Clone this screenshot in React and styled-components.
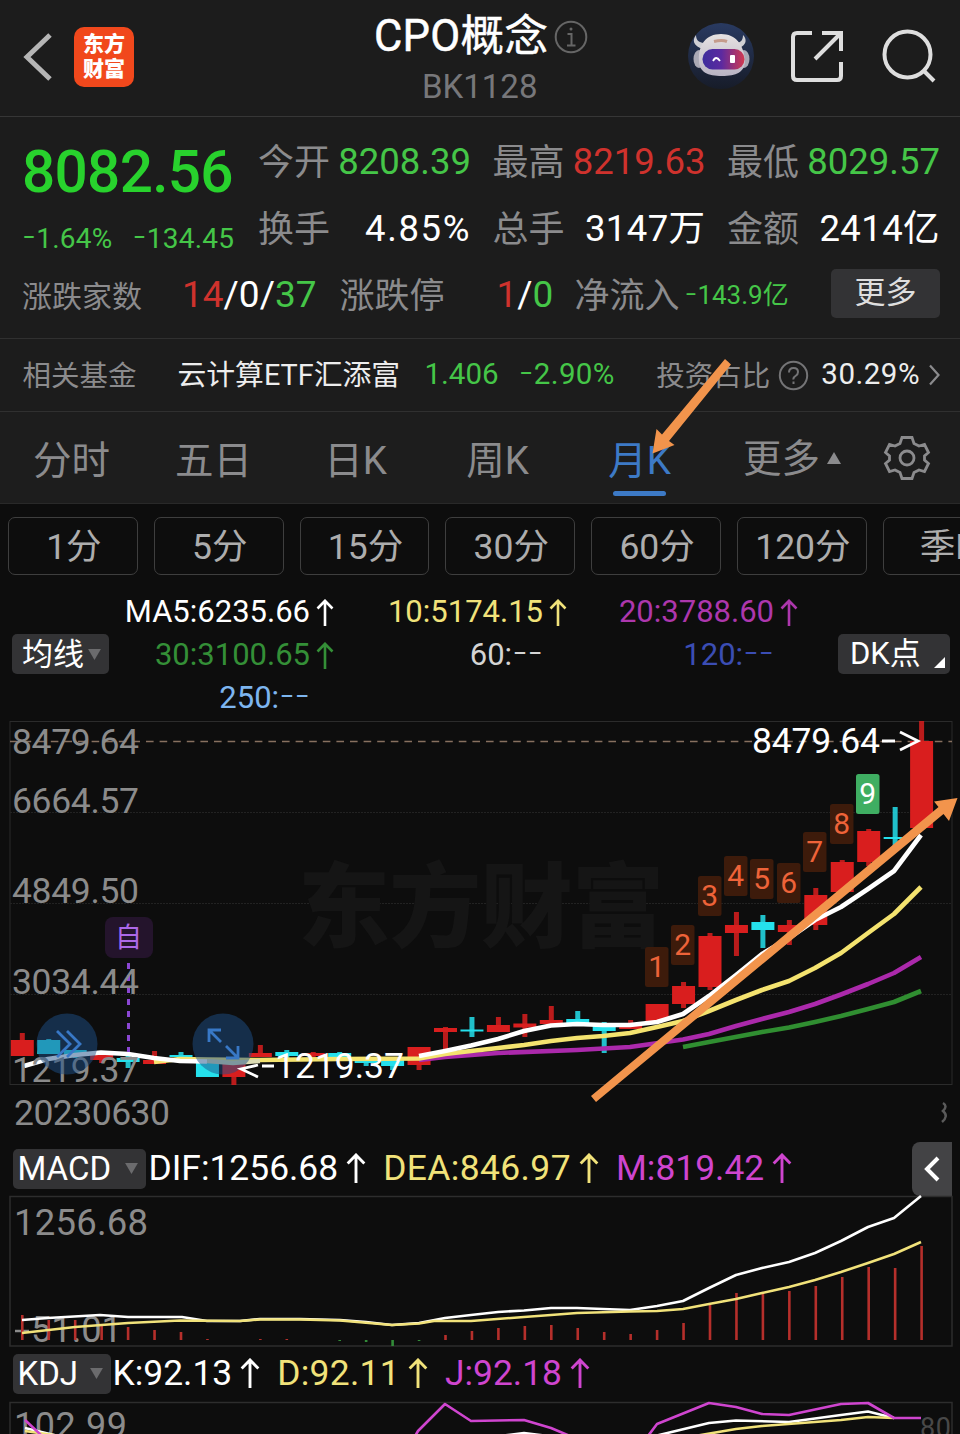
import React from 'react';
import styled, { createGlobalStyle } from 'styled-components';

const GREEN = '#45c648';
const RED = '#cf322d';
const GREY = '#8b8b8d';
const YELLOW = '#f1e27a';
const PINK = '#cf45cf';
const CANDLE_RED = '#d91e1e';
const CANDLE_CYAN = '#25e0ec';
const ORANGE = '#f2944c';

const GlobalStyle = createGlobalStyle`
  * {
    box-sizing: border-box;
  }
  body {
    margin: 0;
    background: #0d0d0d;
    font-family: Roboto, 'Noto Sans CJK SC', sans-serif;
  }
  svg {
    display: block;
    flex: none;
  }
`;

const Page = styled.div`
  position: relative;
  width: 960px;
  height: 1434px;
  overflow: hidden;
  background: #0d0d0d;
  color: #fff;
  line-height: 1.2;
  white-space: nowrap;
`;

const Header = styled.header`
  display: grid;
  grid-template-columns: 370px 1fr 272px;
  height: 117px;
  background: #1c1c1c;
  border-bottom: 1px solid #363636;
`;

const HeaderLeft = styled.div`
  display: flex;
  align-items: center;
  gap: 20px;
  height: 114px;
  padding-left: 22px;
`;

const Logo = styled.div`
  display: flex;
  flex-direction: column;
  justify-content: center;
  width: 60px;
  height: 60px;
  border-radius: 10px;
  background: #f1481c;
  font-size: 21px;
  font-weight: 900;
  line-height: 25px;
  text-align: center;
`;

const HeaderTitle = styled.div`
  display: flex;
  flex-direction: column;
  padding: 8px 0 0 4px;
`;

const TitleRow = styled.div`
  display: flex;
  align-items: center;
  gap: 6px;
  height: 58px;
`;

const Title = styled.h1`
  margin: 0;
  font-size: 43.5px;
  font-weight: 400;
  letter-spacing: 0.3px;
  line-height: 62px;
  -webkit-text-stroke: 0.5px #fff;
`;

const Code = styled.div`
  padding-left: 48px;
  color: #77777a;
  font-size: 33px;
  line-height: 41px;
`;

const HeaderRight = styled.div`
  display: flex;
  align-items: center;
  height: 112px;
`;

const Quote = styled.section`
  display: grid;
  grid-template-columns: 258px 1fr;
  grid-template-rows: 146px 66px;
  height: 222px;
  background: #1c1c1c;
  border-bottom: 1px solid #303030;
`;

const PriceBlock = styled.div`
  padding: 20px 0 0 22px;
`;

const Price = styled.div`
  color: #28d22d;
  font-size: 58.5px;
  font-weight: 500;
  letter-spacing: -0.7px;
  line-height: 70px;
`;

const Changes = styled.div`
  display: flex;
  gap: 20px;
  padding-top: 15px;
  color: ${GREEN};
  font-size: 28px;
  letter-spacing: 0.25px;
  line-height: 34px;
`;

const Stats = styled.div`
  display: grid;
  grid-template-columns: repeat(3, 213px);
  grid-template-rows: 67px 67px;
  column-gap: 21.5px;
  padding-top: 11px;
`;

const Stat = styled.div`
  display: flex;
  align-items: center;
  justify-content: space-between;
  color: ${p => p.color || '#fff'};
  font-size: 36.5px;
  letter-spacing: ${p => p.$spacing || 0}px;
`;

const Label = styled.span`
  padding-top: 4px;
  color: ${GREY};
  font-size: ${p => p.size || 36}px;
  letter-spacing: 0;
`;

const BreadthRow = styled.div`
  display: flex;
  grid-column: 1 / 3;
  align-items: center;
  padding: 0 20px 2px 22px;
  font-size: 37px;
`;

const Tone = styled.span`
  color: ${p => p.color};
`;

const Breadth = styled.div`
  margin: 0 ${p => p.right}px 0 ${p => p.left}px;
`;

const NetFlow = styled.div`
  flex: 1;
  padding: 1px 0 0 5px;
  color: ${GREEN};
  font-size: 26px;
`;

const MoreButton = styled.button`
  width: 109px;
  height: 49px;
  margin-bottom: 4px;
  padding: 0 0 1px;
  border: 0;
  border-radius: 5px;
  background: #333335;
  color: #dedede;
  font: 31px/48px Roboto, 'Noto Sans CJK SC', sans-serif;
`;

const FundRow = styled.section`
  display: flex;
  align-items: center;
  height: 73px;
  padding: 2px 20px 2px 22.5px;
  background: #1c1c1c;
  border-bottom: 1px solid #303030;
  color: ${GREEN};
  font-size: 29.5px;
`;

const FundName = styled.span`
  width: 247px;
  margin-left: 41px;
  color: #ededed;
  font-size: 28.8px;
`;

const FundPercent = styled.span`
  flex: 1;
  margin-left: 20px;
  letter-spacing: 0.4px;
`;

const FundRatio = styled.span`
  margin: 0 9px 0 12px;
  color: #ededed;
  letter-spacing: 0.5px;
`;

const Tabs = styled.nav`
  display: flex;
  height: 92px;
  background: #1d1d1d;
  border-bottom: 1px solid #292929;
`;

const Tab = styled.div`
  display: flex;
  position: relative;
  justify-content: center;
  width: 142px;
  padding-left: 1px;
  color: ${p => (p.$active ? '#3d7ac6' : GREY)};
  font-size: 38.5px;
  line-height: 97px;
  &::after {
    content: '';
    display: ${p => (p.$active ? 'block' : 'none')};
    position: absolute;
    bottom: 7px;
    width: 53px;
    height: 5px;
    border-radius: 3px;
    background: #3d7ac6;
  }
`;

const MoreTab = styled.div`
  display: flex;
  align-items: center;
  gap: 7px;
  width: 139px;
  margin-left: 33px;
  color: ${GREY};
  font-size: 38.5px;
`;

const MoreLabel = styled.span`
  padding-top: 4px;
`;

const Periods = styled.div`
  display: flex;
  gap: 16px;
  padding: 13px 0 0 8px;
`;

const Period = styled.div`
  flex: none;
  width: 129.8px;
  height: 58px;
  padding-left: 2px;
  border: 1.5px solid #3e3e3e;
  border-radius: 7px;
  color: #adadad;
  font-size: 35.5px;
  line-height: 58px;
  text-align: center;
`;

const Legend = styled.div`
  display: flex;
  align-items: center;
  height: 128px;
  margin-top: 15px;
  padding-left: 12px;
`;

const Picker = styled.div`
  display: flex;
  align-items: center;
  justify-content: space-between;
  width: ${p => p.width}px;
  height: 40px;
  padding: 0 8px 0 ${p => p.$left || 5}px;
  border-radius: 5px;
  background: #333335;
  font-size: ${p => p.size || 33}px;
  line-height: ${p => p.$line || 38}px;
`;

const Averages = styled.div`
  display: grid;
  grid-template-columns: 226px 233px 231px;
  grid-template-rows: repeat(3, 43px);
  width: 729px;
  padding-top: 2px;
`;

const Average = styled.div`
  display: flex;
  align-items: center;
  justify-content: flex-end;
  color: ${p => p.color};
  font-size: 31px;
`;

const ArrowSlot = styled.span`
  width: 25px;
  padding-left: 6px;
`;

const IndicatorBar = styled.div`
  display: flex;
  align-items: center;
  height: ${p => p.height}px;
  padding-left: 12.5px;
`;

const Reading = styled.div`
  display: flex;
  align-items: center;
  gap: 8px;
  margin-left: ${p => p.left}px;
  padding-bottom: 1px;
  color: ${p => p.color};
  font-size: 35.4px;
  letter-spacing: ${p => p.$spacing || 0}px;
`;

const Collapse = styled.div`
  display: flex;
  align-items: center;
  justify-content: center;
  width: 40px;
  height: 54px;
  margin-left: auto;
  margin-right: 8px;
  border-radius: 8px 0 0 8px;
  background: #434345;
`;

// Inter has the long raised hyphen the quotes are set with
const Dash = styled.span`
  position: relative;
  top: -0.04em;
  font-family: Inter, sans-serif;
  font-size: 1.1em;
  font-weight: 300;
  line-height: 0;
`;

const Overlay = styled.svg`
  position: absolute;
  top: 0;
  left: 0;
  pointer-events: none;
`;

const Num = ({ children }) => (
  <span>{children.split(/(-)/).map((part, i) => (part === '-' ? <Dash key={i}>-</Dash> : part))}</span>
);

const UpArrow = ({ size = 18 }) => (
  <svg width={size} height={size * 1.5} viewBox="0 0 18 27" fill="none" stroke="currentColor" strokeWidth="2.6">
    <path d="M9 27V2M1.500 9.500L9 1.800l7.500 7.700" />
  </svg>
);

const Caret = () => (
  <svg width="13" height="11" viewBox="0 0 14 12">
    <path d="M0 0h14L7 12z" fill="#6b6b6d" />
  </svg>
);

const Mascot = () => (
  <svg width="66" height="66" viewBox="0 0 66 66">
    <defs>
      <linearGradient id="visor">
        <stop offset="0" stopColor="#3d2d9c" />
        <stop offset="0.45" stopColor="#5c2aa0" />
        <stop offset="1" stopColor="#d23a50" />
      </linearGradient>
      <linearGradient id="disc" x2="0" y2="1">
        <stop offset="0" stopColor="#293a61" />
        <stop offset="1" stopColor="#171c29" />
      </linearGradient>
      <linearGradient id="helmet" x2="0" y2="1">
        <stop offset="0" stopColor="#e6e2e2" />
        <stop offset="1" stopColor="#b9b4c4" />
      </linearGradient>
    </defs>
    <circle cx="33" cy="33" r="33" fill="url(#disc)" />
    <path d="M15 26C5 23 4 17 8 12c0 6 4 8 9 8zM51 25c8-3 8-9 4-13 0 6-3 8-8 8z" fill="#cfcfd4" />
    <ellipse cx="11" cy="36" rx="5.500" ry="9" fill="#aaa9b5" />
    <ellipse cx="56" cy="36" rx="5.500" ry="9" fill="#aaa9b5" />
    <path d="M11 38C10 22 18 11 33 11s23 11 24 27c0 11-9 15-23 15s-23-4-23-15z" fill="url(#helmet)" />
    <path d="M26 18.500q8-2 13 0" stroke="#c59c8c" strokeWidth="3" fill="none" />
    <rect x="14.500" y="26" width="42" height="20.500" rx="10" fill="url(#visor)" />
    <path d="M25 38q3-6 7 0" stroke="#fff" strokeWidth="1.800" fill="none" />
    <rect x="42" y="32" width="5" height="8" rx="1" fill="#fff" />
  </svg>
);

const PITCH = 26.45;
const xAt = i => 22.3 + PITCH * i;

// [body top, body bottom, wick top, wick bottom, rising]
const CANDLES = [
  [1040, 1056, 1033, 1056, 1],
  [1040, 1054, 1039, 1054, 0],
  [1050, 1056, 1050, 1058, 0],
  [1055, 1060, 1052, 1063, 1],
  [1058, 1062, 1056, 1068, 0],
  [1060, 1064, 1051, 1064, 1],
  [1055, 1057, 1052, 1063, 0],
  [1060, 1077, 1060, 1077, 0],
  [1063, 1077, 1063, 1085, 1],
  [1053, 1057, 1045, 1057, 1],
  [1052, 1056, 1050, 1060, 0],
  [1053, 1056, 1052, 1058, 1],
  [1053, 1057, 1052, 1058, 0],
  [1060, 1063, 1057, 1066, 0],
  [1060, 1066, 1058, 1070, 0],
  [1047, 1065, 1047, 1070, 1],
  [1028, 1032, 1027, 1050, 1],
  [1029.5, 1031.5, 1017, 1037, 0],
  [1025, 1032, 1017, 1032, 1],
  [1023.5, 1027.5, 1014, 1037, 1],
  [1020, 1024, 1006, 1024, 1],
  [1019, 1024, 1011, 1024, 0],
  [1026, 1031, 1022, 1053, 0],
  [1026, 1029, 1020, 1029, 1],
  [1004, 1021, 1004, 1021, 1],
  [986, 1004, 982, 1008, 1],
  [936, 987, 933, 990, 1],
  [925, 933, 912, 956, 1],
  [922, 930, 915, 948, 0],
  [925, 932, 920, 945, 1],
  [895, 925, 888, 930, 1],
  [862, 892, 860, 892, 1],
  [831, 862, 829, 866, 1],
  [837, 839, 807, 846, 0],
  [741, 828, 721, 828, 1],
];

const SIGNALS = [
  [645, 947],
  [671, 925],
  [698, 876],
  [724, 856],
  [750, 859],
  [777, 863],
  [803, 832],
  [830, 804],
  [856, 774],
];

const MACD_TOPS = [
  1315, 1320, 1320, 1325, 1327, 1330, 1332, 1339, 1340, 1339, 1339, 1340, 1341, 1342, 1346, 1341, 1335, 1331, 1328,
  1326, 1325, 1328, 1332, 1334, 1330, 1323, 1305, 1293, 1292, 1291, 1286, 1277, 1267, 1268, 1246,
];

const PRICE_LABELS = [
  ['8479.64', 754],
  ['6664.57', 813],
  ['4849.50', 903],
  ['3034.44', 994],
  ['1219.37', 1082],
];

const PriceChart = () => (
  <svg width="960" height="424" viewBox="0 718 960 424" fontSize="35.5">
    <g fill="none" stroke="#222">
      <rect x="10" y="721.5" width="942" height="363" stroke="#2b2b2b" />
      <path d="M10 812.5H952M10 903.5H952M10 994.5H952" strokeDasharray="2 1" />
    </g>
    <text x="298" y="940" fontSize="92" fontWeight="900" fill="#151515" textLength="366">
      东方财富
    </text>
    <path d="M10 741.5H952" stroke="#87705f" strokeWidth="1.3" strokeDasharray="7.6 6" />
    {CANDLES.map(([top, bottom, high, low, up], i) => (
      <g key={i} fill={up ? CANDLE_RED : CANDLE_CYAN}>
        <rect x={xAt(i) - 2.5} y={high} width="5" height={low - high} opacity="0.85" />
        <rect x={xAt(i) - 11.5} y={top} width="23" height={bottom - top} />
      </g>
    ))}
    <g fill="none" strokeWidth="4.6" strokeLinejoin="round">
      <path stroke="#308e31" d="M683 1047L709 1042 762 1032 789 1027.500 815 1022 841 1016 868 1009 894 1002 921 991" />
      <path
        stroke="#ab29ab"
        d="M419 1060L445 1057 498 1053 577 1050 630 1047 683 1039.500 709 1034 736 1026 762 1019 789 1012 815 1004 841 994.500 868 984 894 973 921 957"
      />
      <path
        stroke="#f4e36f"
        d="M154 1062L180 1059 207 1059.500 260 1060 340 1059 419 1058.500 445 1054 471 1051 498 1048 524 1045 551 1041 577 1038 603 1036 630 1033 657 1027 683 1021 709 1011 736 1000 762 990 789 981 815 968 841 953 868 933 894 914 921 887"
      />
      <path
        stroke="#fff"
        d="M24 1066L48 1059 75 1055 101 1052.500 128 1054 154 1058 180 1061 207 1061.500"
      />
      <path stroke="#dcdcb4" d="M207 1061L233 1063 260 1061" />
      <path
        stroke="#fff"
        d="M419 1056L445 1051 471 1045.500 498 1039 524 1031 551 1025.500 577 1024 603 1025 630 1025 657 1022 683 1014 709 996 736 975 762 954 789 938 815 920 841 907 868 889 894 871 921 835"
      />
    </g>
    <path d="M128.500 963V1052" stroke="#8a46d2" strokeWidth="3" strokeDasharray="6 6" />
    <rect x="105" y="917" width="48" height="41" rx="8" fill="#24142c" />
    <text x="128.500" y="946.500" fontSize="27" fill="#ac68e8" textAnchor="middle">
      自
    </text>
    <g fill="#8b8b8b">
      {PRICE_LABELS.map(([value, y]) => (
        <text key={value} x="12" y={y} textLength="127">
          {value}
        </text>
      ))}
      <text x="14" y="1124.500" textLength="156">
        20230630
      </text>
    </g>
    <g fill="#1d4f88" fillOpacity="0.5">
      <circle cx="67" cy="1044" r="30.500" />
      <circle cx="223" cy="1044" r="30.500" />
    </g>
    <g fill="none" stroke="#3878c6" strokeWidth="2.800">
      <path d="M57 1031l13 13-13 13M67 1031l13 13-13 13" />
      <path d="M209 1042v-12h12M209 1030l12 12M238 1046v12h-12M238 1058l-12-12" />
    </g>
    {SIGNALS.map(([x, y], i) => (
      <g key={x}>
        <rect x={x} y={y} width="23.500" height="40" rx="2.500" fill={i === 8 ? '#3fae62' : '#3d1b0b'} />
        <text
          x={x + 11.8}
          y={y + 29.5}
          fontSize="30"
          fill={i === 8 ? '#fff' : '#ee6339'}
          textAnchor="middle"
        >
          {i + 1}
        </text>
      </g>
    ))}
    <g fill="#fff">
      <text x="752" y="753" textLength="128">
        8479.64
      </text>
      <path
        d="M882 741h13M900 732l18 9-18 9M258 1065l-17 4 17 8M262 1066h12"
        stroke="#fff"
        strokeWidth="2.800"
        fill="none"
      />
      <text x="275" y="1078" textLength="129">
        1219.37
      </text>
    </g>
    <path d="M943 1103q5 3 0 8q6 5-1 11" stroke="#8e8e8e" strokeWidth="2.500" fill="none" opacity="0.6" />
  </svg>
);

const MacdChart = () => (
  <svg width="960" height="154" viewBox="0 1195 960 154" fontSize="36.500">
    <rect x="10" y="1196.500" width="942" height="149.500" fill="none" stroke="#2d2d2d" strokeWidth="1.500" />
    <g fill="#8b8b8b">
      <text x="14" y="1235" textLength="134">
        1256.68
      </text>
      <path d="M15 1331h14" stroke="#8b8b8b" strokeWidth="2.500" />
      <text x="31" y="1342" textLength="91">
        51.01
      </text>
    </g>
    {MACD_TOPS.map((top, i) => (
      <rect
        key={i}
        x={xAt(i) - 1.3}
        y={Math.min(top, 1340)}
        width="2.600"
        height={Math.abs(1340 - top)}
        fill={top > 1340 ? '#328b38' : '#b52f2b'}
      />
    ))}
    <g fill="none" strokeWidth="2.600" strokeLinejoin="round">
      <path
        stroke="#fff"
        d="M22 1320L48 1318 100 1315 128 1317 182 1317 207 1321 240 1321 260 1319 300 1319 340 1320 366 1322 392 1325 419 1323 445 1318 471 1315 498 1312 524 1310.500 551 1308 577 1308 603 1309 630 1310 657 1306 683 1301 709 1288 736 1275 762 1268 789 1262 815 1253 841 1241 868 1227 894 1218 921 1196"
      />
      <path
        stroke={YELLOW}
        d="M22 1333L75 1327 128 1323 180 1320.500 240 1321 260 1319.500 300 1319.500 340 1320.500 392 1325 419 1323.500 434 1321 471 1321 524 1317 551 1315 577 1313 630 1311.500 657 1311 683 1309 709 1304 736 1299 762 1293 789 1287 815 1280 841 1272 868 1263 894 1254 921 1242"
      />
    </g>
  </svg>
);

const KdjChart = () => (
  <svg width="960" height="36" viewBox="0 1398 960 36" fontSize="36">
    <path d="M10 1440V1402.500H952V1440" fill="none" stroke="#2d2d2d" strokeWidth="1.500" />
    <text x="14" y="1438" textLength="113" fill="#8b8b8b">
      102.99
    </text>
    <text x="920" y="1437" fontSize="27" textLength="31" fill="#484848">
      80
    </text>
    <g fill="none" strokeWidth="2.600" strokeLinejoin="round">
      <path
        stroke="#fff"
        d="M25 1428L58 1436M500 1436L524 1433 548 1436M655 1436L709 1423 736 1420.500 789 1422 841 1415 868 1411.500 894 1418"
      />
      <path stroke={YELLOW} d="M25 1431L60 1436M695 1436L736 1429 762 1426 841 1420 868 1417 894 1418" />
      <path
        stroke={PINK}
        d="M25 1420L42 1436M414 1438L418 1431 445 1404 471 1421 524 1420 551 1428 570 1436M648 1436L657 1424 709 1403 736 1407 762 1414 789 1415 841 1404 868 1403 894 1418 921 1418"
      />
    </g>
  </svg>
);

const App = () => (
  <Page>
    <GlobalStyle />
    <Header>
      <HeaderLeft>
        <svg width="32" height="50" viewBox="0 0 32 50" fill="none" stroke="#b5b5b5" strokeWidth="5">
          <path d="M28 3L5 25l23 22" />
        </svg>
        <Logo>
          <span>东方</span>
          <span>财富</span>
        </Logo>
      </HeaderLeft>
      <HeaderTitle>
        <TitleRow>
          <Title>CPO概念</Title>
          <svg width="34" height="34" viewBox="0 0 34 34" fill="none" stroke="#666" strokeWidth="2">
            <circle cx="17" cy="17" r="15.300" />
            <path d="M13.500 14H17.500V25.500M13 25.500h8.500" />
            <circle cx="17" cy="9" r="1.500" fill="#666" stroke="none" />
          </svg>
        </TitleRow>
        <Code>BK1128</Code>
      </HeaderTitle>
      <HeaderRight>
        <Mascot />
        <svg width="126" height="60" viewBox="754 26 126 60" fill="none" stroke="#dedede" strokeWidth="4">
          <path d="M812 33H797q-4 0-4 4V76q0 4 4 4H837q4 0 4-4V62M822 33H841V51M840 34L815 59" />
        </svg>
        <svg width="58" height="60" viewBox="880 26 58 60" fill="none" stroke="#dedede" strokeWidth="4">
          <circle cx="907.500" cy="54.500" r="23" />
          <path d="M923 70l11 11" />
        </svg>
      </HeaderRight>
    </Header>

    <Quote>
      <PriceBlock>
        <Price>8082.56</Price>
        <Changes>
          <Num>-1.64%</Num>
          <Num>-134.45</Num>
        </Changes>
      </PriceBlock>
      <Stats>
        <Stat color={GREEN}>
          <Label>今开</Label>8208.39
        </Stat>
        <Stat color={RED}>
          <Label>最高</Label>8219.63
        </Stat>
        <Stat color={GREEN}>
          <Label>最低</Label>8029.57
        </Stat>
        <Stat $spacing={1.6}>
          <Label>换手</Label>4.85%
        </Stat>
        <Stat $spacing={0.4}>
          <Label>总手</Label>3147万
        </Stat>
        <Stat $spacing={0.4}>
          <Label>金额</Label>2414亿
        </Stat>
      </Stats>
      <BreadthRow>
        <Label size={30}>涨跌家数</Label>
        <Breadth left={40} right={23}>
          <Tone color={RED}>14</Tone>/0/<Tone color={GREEN}>37</Tone>
        </Breadth>
        <Label size={35}>涨跌停</Label>
        <Breadth left={52} right={21}>
          <Tone color={RED}>1</Tone>/<Tone color={GREEN}>0</Tone>
        </Breadth>
        <Label size={35}>净流入</Label>
        <NetFlow>
          <Num>-143.9亿</Num>
        </NetFlow>
        <MoreButton>更多</MoreButton>
      </BreadthRow>
    </Quote>

    <FundRow>
      <Label size={28.5}>相关基金</Label>
      <FundName>云计算ETF汇添富</FundName>
      <span>1.406</span>
      <FundPercent>
        <Num>-2.90%</Num>
      </FundPercent>
      <Label size={28.5}>投资占比</Label>
      <svg width="39" height="31" viewBox="-8 0 39 31" fill="none" stroke="#747476" strokeWidth="2">
        <circle cx="15.500" cy="15.500" r="13.700" />
        <path d="M11 12.500q0-4.500 4.500-4.500t4.500 4q0 2.500-2.500 4t-2 3.500M15.500 21.500v2.500" />
      </svg>
      <FundRatio>30.29%</FundRatio>
      <svg width="11" height="22" viewBox="0 0 11 22" fill="none" stroke="#8b8b8d" strokeWidth="2.200">
        <path d="M1 1.500l8.500 9.500L1 20.500" />
      </svg>
    </FundRow>

    <Tabs>
      <Tab>分时</Tab>
      <Tab>五日</Tab>
      <Tab>日K</Tab>
      <Tab>周K</Tab>
      <Tab $active>月K</Tab>
      <MoreTab>
        <MoreLabel>更多</MoreLabel>
        <svg width="14" height="12" viewBox="0 0 14 12">
          <path d="M0 12h14L7 0z" fill={GREY} />
        </svg>
      </MoreTab>
      <svg width="50" height="92" viewBox="-25 -46 50 92" fill="none" stroke={GREY} strokeWidth="2.800">
        <path d="M-5-20.500H5L7-14.500 12-12 17.500-13.500 21.500-5.500 17.500-2V2L21.500 5.500 17.500 13.500 12 12 7 14.500 5 20.500H-5L-7 14.500-12 12-17.500 13.500-21.500 5.500-17.500 2V-2L-21.500-5.500-17.500-13.500-12-12-7-14.500z" />
        <circle r="7" />
      </svg>
    </Tabs>

    <Periods>
      <Period>1分</Period>
      <Period>5分</Period>
      <Period>15分</Period>
      <Period>30分</Period>
      <Period>60分</Period>
      <Period>120分</Period>
      <Period>季K</Period>
    </Periods>

    <Legend>
      <Picker width={97} size={31} $left={10} $line={45}>
        均线
        <Caret />
      </Picker>
      <Averages>
        <Average color="#fff">
          MA5:6235.66
          <ArrowSlot>
            <UpArrow />
          </ArrowSlot>
        </Average>
        <Average color={YELLOW}>
          10:5174.15
          <ArrowSlot>
            <UpArrow />
          </ArrowSlot>
        </Average>
        <Average color="#ad37ad">
          20:3788.60
          <ArrowSlot>
            <UpArrow />
          </ArrowSlot>
        </Average>
        <Average color="#348f37">
          30:3100.65
          <ArrowSlot>
            <UpArrow />
          </ArrowSlot>
        </Average>
        <Average color="#d4d4d4">
          <Num>60:--</Num>
          <ArrowSlot />
        </Average>
        <Average color="#3b4db4">
          <Num>120:--</Num>
          <ArrowSlot />
        </Average>
        <Average color="#7db5ef">
          <Num>250:--</Num>
          <ArrowSlot />
        </Average>
      </Averages>
      <Picker width={112} size={31} $left={12} $line={42}>
        DK点
        <svg width="8" height="34" viewBox="0 0 8 34" overflow="visible">
          <path d="M11 20v11H0z" fill="#fff" />
        </svg>
      </Picker>
    </Legend>

    <PriceChart />

    <IndicatorBar height={53}>
      <Picker width={133}>
        MACD
        <Caret />
      </Picker>
      <Reading color="#fff" left={3}>
        DIF:1256.68
        <UpArrow size={20} />
      </Reading>
      <Reading color={YELLOW} left={17} $spacing={0.4}>
        DEA:846.97
        <UpArrow size={20} />
      </Reading>
      <Reading color={PINK} left={17}>
        M:819.42
        <UpArrow size={20} />
      </Reading>
      <Collapse>
        <svg width="18" height="26" viewBox="0 0 18 26" fill="none" stroke="#fff" strokeWidth="4">
          <path d="M15 2L4 13l11 11" />
        </svg>
      </Collapse>
    </IndicatorBar>
    <MacdChart />
    <IndicatorBar height={49}>
      <Picker width={98}>
        KDJ
        <Caret />
      </Picker>
      <Reading color="#fff" left={2}>
        K:92.13
        <UpArrow size={20} />
      </Reading>
      <Reading color={YELLOW} left={17} $spacing={0.3}>
        D:92.11
        <UpArrow size={20} />
      </Reading>
      <Reading color={PINK} left={17}>
        J:92.18
        <UpArrow size={20} />
      </Reading>
    </IndicatorBar>
    <KdjChart />

    <Overlay width="960" height="1434" fill={ORANGE}>
      <path d="M725 359L731 364.500 669 441 674.500 445 652.500 453.500 656.500 429 662 434.500z" />
      <path d="M591 1096L938.500 807 934 801.500 957.500 798 949 821 943.500 814 596 1102z" />
    </Overlay>
  </Page>
);

export default App;
